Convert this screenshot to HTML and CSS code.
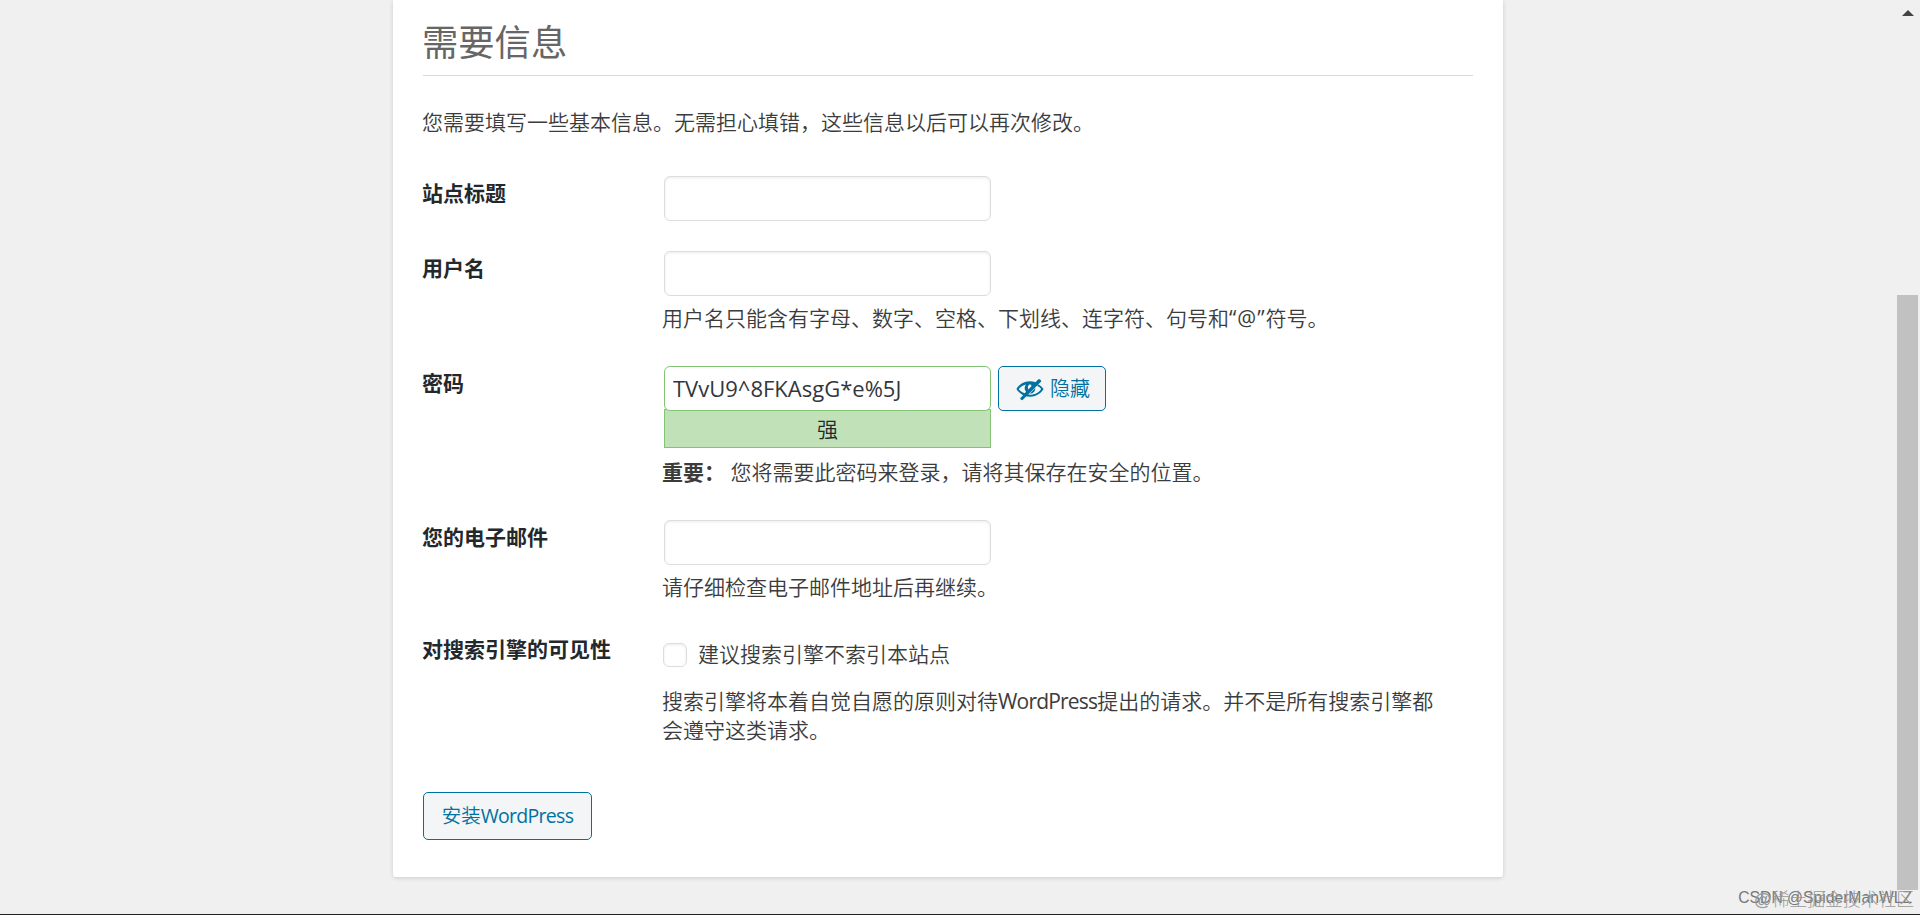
FILE: index.html
```html
<!DOCTYPE html>
<html lang="zh-CN">
<head>
    <meta charset="UTF-8">
    <meta name="viewport" content="width=device-width, initial-scale=1.0">
    <title>WordPress › 安装</title>
    <link rel="stylesheet" href="styles.css">
</head>
<body>
    <main class="card">
        <h1>需要信息</h1>
        <p class="intro">您需要填写一些基本信息。无需担心填错，这些信息以后可以再次修改。</p>

        <form id="setup">
            <div class="row row-title">
                <label class="name" for="weblog_title">站点标题</label>
                <div class="field">
                    <input class="text" type="text" id="weblog_title">
                </div>
            </div>
            <div class="row row-user">
                <label class="name" for="user_login">用户名</label>
                <div class="field">
                    <input class="text" type="text" id="user_login">
                    <p>用户名只能含有字母、数字、空格、下划线、连字符、句号和<span class="at">“@”</span>符号。</p>
                </div>
            </div>
            <div class="row row-pass">
                <label class="name" for="pass1">密码</label>
                <div class="field">
                    <div class="pass-wrap">
                        <div class="pass-box">
                            <input class="text strong" type="text" id="pass1" value="TVvU9^8FKAsgG*e%5J">
                            <div class="strength">强</div>
                        </div>
                        <button type="button" class="btn btn-hide">
                            <svg class="eye" viewBox="0 0 20 20" fill="currentColor">
                                <path d="M17.2 3.3l.5.5c.4.4.4.8.1 1.100L4.900 17.700c-.4.4-.8.4-1.200 0l-.4-.4c-.4-.4-.4-.8 0-1.100l1.800-1.800C2.900 13.200 1.200 11.600.3 10 2.300 6.700 5.800 4.500 10 4.500c1.400 0 2.700.2 3.900.7l1.900-1.900c.5-.4 1-.4 1.400 0zM7.200 6.700C4.900 7.100 3.100 8.400 2 10c.9 1.400 2.400 2.500 4.200 3l1-1c-.6-.7-1-1.600-1-2.500 0-1.100.4-2.100 1-2.800zM10.700 8.400c.4-.4.4-1 0-1.400s-1-.4-1.400 0c-.9.9-1 1.800-.6 3.400zM16.200 6.700c1.400.9 2.600 2 3.500 3.300-2 3.300-5.500 5.500-9.700 5.500-.9 0-1.800-.1-2.600-.3l1.200-1.200c.5.100.9.100 1.400.1 3.400 0 6.300-1.500 8-4.100-.8-1-1.800-1.800-3-2.300zM13.800 9.300c.1 2.200-1.700 4.200-4 4.100z"/>
                            </svg>
                            <span>隐藏</span>
                        </button>
                    </div>
                    <p class="important"><strong>重要：</strong> 您将需要此密码来登录，请将其保存在安全的位置。</p>
                </div>
            </div>
            <div class="row row-email">
                <label class="name" for="admin_email">您的电子邮件</label>
                <div class="field">
                    <input class="text" type="text" id="admin_email">
                    <p>请仔细检查电子邮件地址后再继续。</p>
                </div>
            </div>
            <div class="row row-search">
                <span class="name">对搜索引擎的可见性</span>
                <div class="field">
                    <label class="check"><input type="checkbox"> 建议搜索引擎不索引本站点</label>
                    <p class="note">搜索引擎将本着自觉自愿的原则对待<span class="latin">WordPress</span>提出的请求。并不是所有搜索引擎都会遵守这类请求。</p>
                </div>
            </div>
            <button type="button" class="btn btn-install">安装<span class="latin">WordPress</span></button>
        </form>
    </main>

    <div class="scrollbar">
        <span class="arrow-up"></span>
        <span class="thumb"></span>
    </div>
    <span class="watermark">CSDN @SpiderManWLZ</span>
    <span class="watermark community">@稀土掘金技术社区</span>
</body>
</html>
```
FILE: styles.css
```css
* {
    box-sizing: border-box;
}
body {
    height: 915px;
    margin: 0;
    overflow: hidden;
    position: relative;
    background: #f0f0f0;
    border-bottom: 1px solid #202124;
    color: #3c3c3c;
    font-family: "Open Sans", "Noto Sans CJK SC", sans-serif;
    font-size: 21px;
    font-weight: 350;
    line-height: 29px;
}
.card {
    width: 1110px;
    height: 877px;
    margin-left: 393px;
    padding: 15px 30px 0 29px;
    background: #fff;
    border-radius: 0 0 3px 3px;
    box-shadow: 0 1px 4px rgba(0, 0, 0, 0.16);
}
h1 {
    height: 61px;
    margin: 0 0 0 1px;
    border-bottom: 1px solid #dadada;
    color: #666;
    font-size: 36.3px;
    font-weight: 400;
    line-height: 55px;
    text-indent: -1px;
}
p {
    margin: 0;
}
.intro {
    margin-top: 32px;
}
.row {
    display: flex;
}
.row-title {
    margin-top: 39px;
    height: 75px;
}
.row-user {
    height: 115px;
}
.row-pass {
    height: 154px;
}
.row-email {
    height: 112px;
}
.row-search {
    height: 160px;
}
.name {
    width: 240px;
    padding-top: 3px;
    color: #23282d;
    font-weight: 700;
}
.field {
    width: 780px;
}
.field p {
    margin-top: 8px;
}
.text {
    display: block;
    width: 327px;
    height: 45px;
    margin-left: 2px;
    padding: 0 8px 2px;
    border: 1px solid #ddd;
    border-radius: 6px;
    background: #fff;
    box-shadow: inset 0 1px 3px rgba(0, 0, 0, 0.08);
    color: #32373c;
    font-family: "Open Sans", sans-serif;
    font-size: 22px;
}
.strong {
    position: relative;
    border-color: #83c373;
    box-shadow: none;
}
.pass-wrap {
    display: flex;
    gap: 7px;
}
.strength {
    width: 327px;
    height: 39px;
    margin: -2px 0 0 2px;
    border: 1px solid #83c373;
    background: #c1e1b9;
    color: #23282d;
    line-height: 38px;
    text-align: center;
}
.btn {
    border: 1px solid #0071a1;
    border-radius: 5px;
    background: #f3f5f6;
    color: #0071a1;
    font: inherit;
    white-space: nowrap;
}
.btn-hide {
    display: flex;
    align-items: center;
    gap: 6px;
    width: 108px;
    height: 45px;
    padding: 0 0 0 17px;
    font-size: 20px;
}
.eye {
    width: 28px;
    height: 28px;
}
.field .important {
    margin-top: 10px;
}
.important strong {
    font-weight: 700;
}
.at {
    font-weight: 400;
    letter-spacing: 1px;
}
.latin {
    font-weight: 400;
    letter-spacing: -0.8px;
}
.check {
    display: flex;
    align-items: center;
    height: 39px;
    margin-top: 3px;
}
.check input {
    appearance: none;
    width: 24px;
    height: 24px;
    margin: 0 11px 0 1px;
    border: 1px solid #ddd;
    border-radius: 6px;
    background: #fff;
    box-shadow: inset 0 1px 3px rgba(0, 0, 0, 0.08);
}
.field .note {
    margin-top: 13px;
}
.btn-install {
    width: 169px;
    height: 48px;
    margin-left: 1px;
    padding: 0 0 2px;
    font-size: 19.5px;
}
.btn-install .latin {
    letter-spacing: -0.7px;
}

/* page scrollbar */
.scrollbar {
    position: absolute;
    top: 0;
    right: 0;
    width: 23px;
    height: 890px;
}
.arrow-up {
    position: absolute;
    top: 10px;
    left: 5px;
    border: 6px solid transparent;
    border-top: 0;
    border-bottom-color: #444;
}
.thumb {
    position: absolute;
    top: 295px;
    bottom: 0;
    left: 0;
    width: 21px;
    background: #c1c1c1;
}
.watermark {
    position: absolute;
    right: 8px;
    bottom: 2px;
    color: #777;
    font-family: "Liberation Sans", "Noto Sans CJK SC", sans-serif;
    font-size: 15.7px;
    line-height: 28px;
}
.community {
    right: 6px;
    bottom: 0;
    color: #999;
    font-size: 17.8px;
    font-weight: 300;
}
```
